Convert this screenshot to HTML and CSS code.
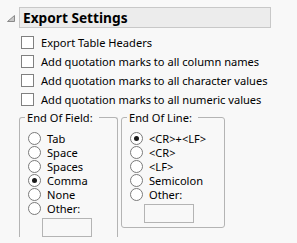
FILE: index.html
```html
<!DOCTYPE html>
<html lang="en">
<head>
  <meta charset="UTF-8">
  <title>Export Settings</title>
  <link rel="stylesheet" href="styles.css">
</head>
<body>
  <div class="outline-head">
    <svg class="disclosure" width="8" height="7" viewBox="0 0 8 7">
      <path d="M7.5 0.5 L7.5 6.5 L0.5 6.5 Z" fill="#c8c8c8" stroke="#8a8a8a" stroke-width="1"/>
    </svg>
    <div class="title-box">Export Settings</div>
  </div>

  <div class="panel">
    <div class="check-row"><span class="checkbox"></span>Export Table Headers</div>
    <div class="check-row"><span class="checkbox"></span>Add quotation marks to all column names</div>
    <div class="check-row"><span class="checkbox"></span>Add quotation marks to all character values</div>
    <div class="check-row"><span class="checkbox"></span>Add quotation marks to all numeric values</div>

    <div class="groups">
      <fieldset class="group group-field">
        <legend>End Of Field:</legend>
        <div class="radio-row"><span class="radio"></span>Tab</div>
        <div class="radio-row"><span class="radio"></span>Space</div>
        <div class="radio-row"><span class="radio"></span>Spaces</div>
        <div class="radio-row"><span class="radio checked"></span>Comma</div>
        <div class="radio-row"><span class="radio"></span>None</div>
        <div class="radio-row"><span class="radio"></span>Other:</div>
        <div class="other-box"></div>
      </fieldset>
      <fieldset class="group group-line">
        <legend>End Of Line:</legend>
        <div class="radio-row"><span class="radio checked"></span>&lt;CR&gt;+&lt;LF&gt;</div>
        <div class="radio-row"><span class="radio"></span>&lt;CR&gt;</div>
        <div class="radio-row"><span class="radio"></span>&lt;LF&gt;</div>
        <div class="radio-row"><span class="radio"></span>Semicolon</div>
        <div class="radio-row"><span class="radio"></span>Other:</div>
        <div class="other-box"></div>
      </fieldset>
    </div>
  </div>
</body>
</html>
```

FILE: styles.css
```css
body {
  margin: 0;
  background-color: #f8f8f8;
  font-family: "Noto Sans", "Open Sans", sans-serif;
  font-size: 11.1px;
  line-height: 15px;
  color: #000;
  height: 243px;
  overflow: hidden;
}
.outline-head {
  display: flex;
  align-items: center;
  padding: 7px 0 0 7px;
}
.disclosure {
  margin-right: 4px;
  margin-top: 1px;
}
.title-box {
  width: 247px;
  height: 19px;
  line-height: 19px;
  border: 1px solid #c8c8c8;
  background-color: #ececec;
  font-weight: bold;
  font-size: 13.7px;
  padding-left: 3px;
}
.panel {
  padding: 5px 0 0 21px;
}
.check-row {
  display: flex;
  align-items: center;
  height: 19px;
}
.checkbox {
  width: 11px;
  height: 11px;
  border: 1px solid #808080;
  background-color: #fff;
  margin-right: 7px;
}
.groups {
  display: flex;
  gap: 3px;
  margin-left: -2px;
  margin-top: 1px;
}
.group {
  margin: 0;
  border: 1px solid #b4b4b4;
  border-radius: 3px;
  padding: 6px 0 10px 8px;
}
.group legend {
  padding: 0 6px 0 2px;
  margin-left: -3px;
}
.group-field {
  width: 89px;
  height: 110px;
  border-bottom: none;
  border-radius: 3px 3px 0 0;
}
.group-line {
  width: 94px;
  height: 100px;
}
.radio-row {
  display: flex;
  align-items: center;
  height: 14px;
}
.radio {
  width: 11px;
  height: 11px;
  border: 1px solid #7a7a7a;
  border-radius: 50%;
  background-color: #fff;
  margin-right: 6px;
  display: flex;
  align-items: center;
  justify-content: center;
}
.radio.checked::after {
  content: "";
  width: 5px;
  height: 5px;
  border-radius: 50%;
  background-color: #1a1a1a;
}
.other-box {
  width: 48px;
  height: 17px;
  border: 1px solid #b4b4b4;
  margin: 3px 0 0 14px;
}
```
